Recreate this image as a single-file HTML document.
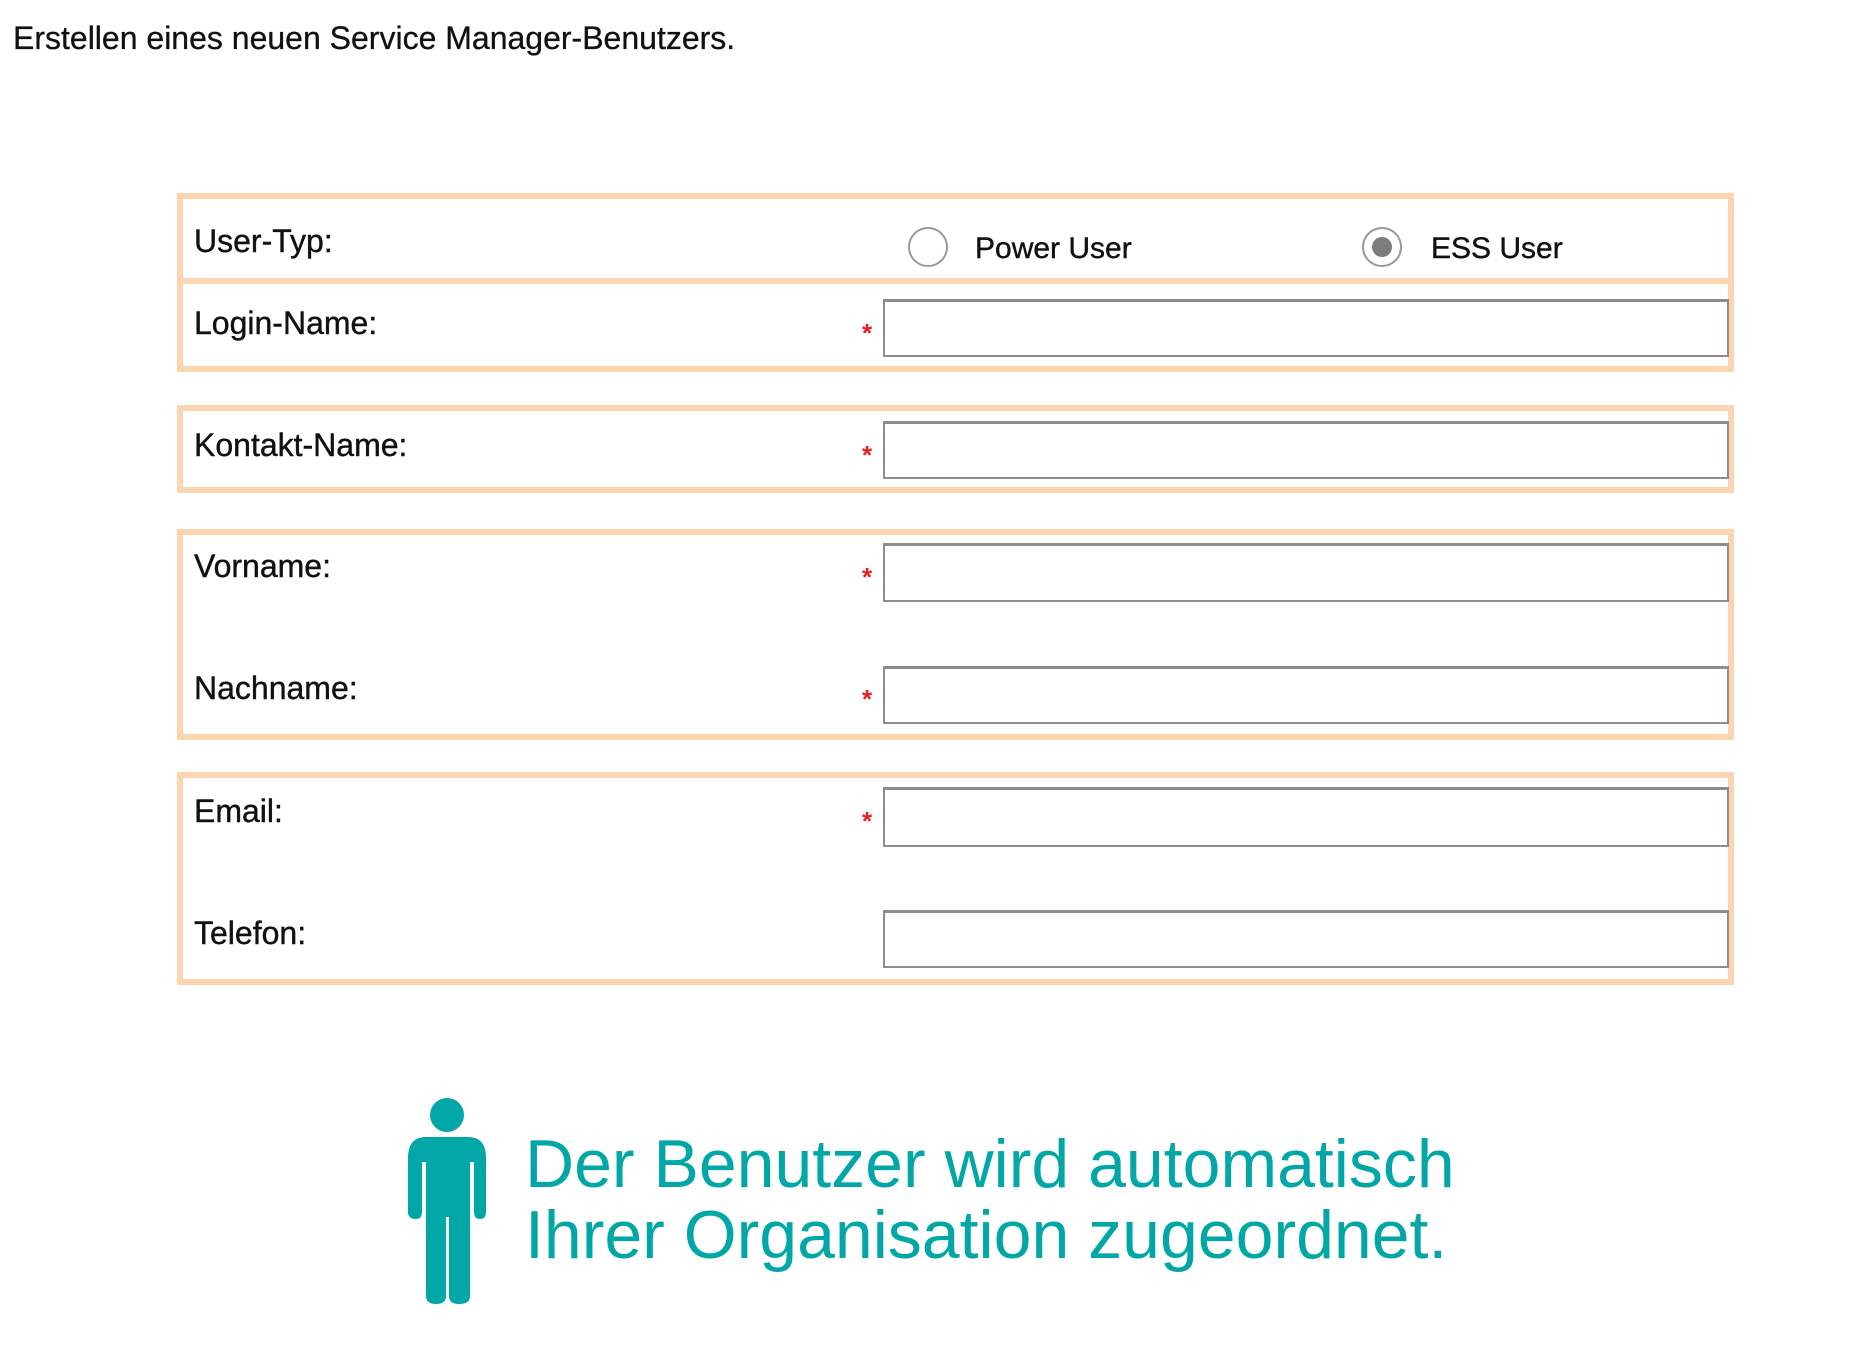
<!DOCTYPE html>
<html><head><meta charset="utf-8"><style>
body{margin:0;width:1854px;height:1352px;background:#fff;position:relative;font-family:"Liberation Sans",sans-serif;color:#111;overflow:hidden}
.a{position:absolute}
.fr{position:absolute;left:177px;width:1545px;border:6px solid #fbd5b0;background:#fff}
.lb{position:absolute;left:194px;font-size:32px;line-height:36px;-webkit-text-stroke:0.4px #111}
.in{position:absolute;left:883px;width:842px;border:2px solid #8d8d8d;border-top-width:3px;background:#fff}
.st{position:absolute;left:862px;color:#e82020;font-size:26px;font-weight:bold}
.t{position:absolute;left:525px;font-size:68px;color:#00a7a6;line-height:70px;white-space:nowrap}
</style></head><body>
<div class="a" style="left:13px;top:20px;font-size:32px;line-height:36px;-webkit-text-stroke:0.3px #111">Erstellen eines neuen Service Manager-Benutzers.</div>
<div class="fr" style="top:193px;height:79px"></div>
<div class="fr" style="top:278px;height:82px"></div>
<div class="fr" style="top:405px;height:76px"></div>
<div class="fr" style="top:529px;height:199px"></div>
<div class="fr" style="top:772px;height:201px"></div>
<div class="lb" style="top:223px">User-Typ:</div>
<div class="a" style="left:908px;top:227px;width:36px;height:36px;border:2px solid #999;border-radius:50%"></div>
<div class="a" style="left:975px;top:232px;font-size:30px;-webkit-text-stroke:0.4px #111">Power User</div>
<div class="a" style="left:1362px;top:227px;width:36px;height:36px;border:2px solid #999;border-radius:50%;box-sizing:content-box"><div style="margin:8px;width:20px;height:20px;border-radius:50%;background:#7d7d7d"></div></div>
<div class="a" style="left:1431px;top:232px;font-size:30px;-webkit-text-stroke:0.4px #111">ESS User</div>
<div class="lb" style="top:305px">Login-Name:</div><div class="st" style="top:318px">*</div><div class="in" style="top:299px;height:53px"></div>
<div class="lb" style="top:427px">Kontakt-Name:</div><div class="st" style="top:440px">*</div><div class="in" style="top:421px;height:53px"></div>
<div class="lb" style="top:548px">Vorname:</div><div class="st" style="top:562px">*</div><div class="in" style="top:543px;height:54px"></div>
<div class="lb" style="top:670px">Nachname:</div><div class="st" style="top:684px">*</div><div class="in" style="top:666px;height:53px"></div>
<div class="lb" style="top:793px">Email:</div><div class="st" style="top:806px">*</div><div class="in" style="top:787px;height:55px"></div>
<div class="lb" style="top:915px">Telefon:</div><div class="in" style="top:910px;height:53px"></div>
<svg class="a" style="left:0;top:0" width="1854" height="1352">
<circle cx="447" cy="1115" r="17" fill="#00a7a6"/>
<path fill="#00a7a6" d="M426 1137 H468 Q486 1137 486 1158 V1212 Q486 1219 480 1219 Q474 1219 474 1212 V1162 H470 V1296 Q470 1304 459 1304 Q449 1304 449 1296 V1217 H446 V1296 Q446 1304 436 1304 Q426 1304 426 1296 V1162 H422 V1212 Q422 1219 416 1219 Q408 1219 408 1212 V1158 Q408 1137 426 1137 Z"/>
</svg>
<div class="t" style="top:1129px">Der Benutzer wird automatisch</div>
<div class="t" style="top:1200px">Ihrer Organisation zugeordnet.</div>
</body></html>
